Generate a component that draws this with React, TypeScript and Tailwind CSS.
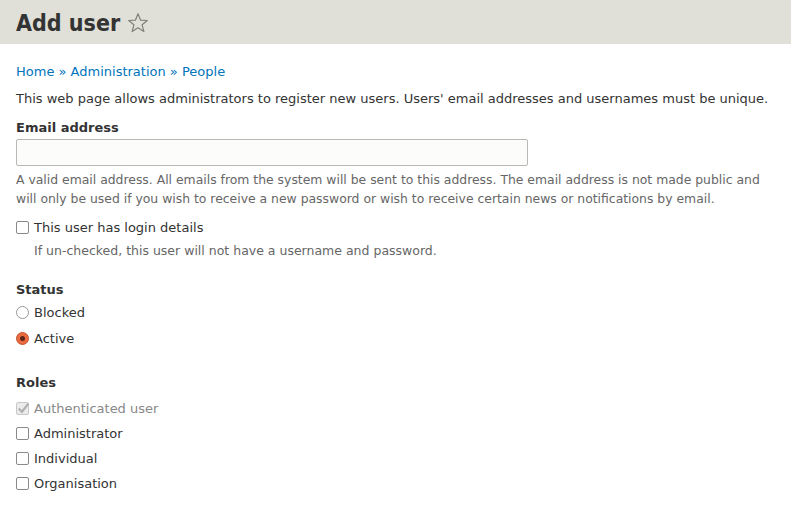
import React from "react";

const Checkbox = ({ disabled, checked }: { disabled?: boolean; checked?: boolean }) => (
  <span
    className={`inline-block w-[13px] h-[13px] rounded-[2px] border ${disabled ? "border-[#c8c8c8] bg-[#ececec]" : "border-[#8a8a8a] bg-white"} relative shrink-0`}
  >
    {checked && (
      <svg viewBox="0 0 13 13" className="absolute -left-px -top-[2px] w-[14px] h-[14px]">
        <path d="M2.5 7 L5.5 10 L11.5 2.5" fill="none" stroke="#b0b0b0" strokeWidth="2" />
      </svg>
    )}
  </span>
);

const Radio = ({ checked }: { checked?: boolean }) =>
  checked ? (
    <span className="inline-flex items-center justify-center w-[13px] h-[13px] rounded-full border border-[#c0542e] bg-[#ec6a40] shrink-0">
      <span className="w-[5px] h-[5px] rounded-full bg-[#5a2416]" />
    </span>
  ) : (
    <span className="inline-block w-[13px] h-[13px] rounded-full border border-[#9a9a9a] bg-white shrink-0" />
  );

export default function App() {
  return (
    <div className="w-[791px] h-[510px] bg-white text-[#333] text-[13px] overflow-hidden" style={{ fontFamily: '"DejaVu Sans", sans-serif' }}>
      <div className="h-[44px] bg-[#e0e0d8] px-4 pt-[3px] flex items-center">
        <h1 className="text-[23px] font-bold text-[#333] flex items-center gap-[6px]" style={{ fontFamily: '"DejaVu Sans Condensed", "DejaVu Sans", sans-serif' }}>
          Add user
          <svg viewBox="0 0 24 24" className="w-[24px] h-[24px] -mt-[1px]">
            <path d="M12 2.8 L14.6 9.2 L21.3 9.5 L16.1 13.8 L17.9 20.6 L12 16.8 L6.1 20.6 L7.9 13.8 L2.7 9.5 L9.4 9.2 Z" fill="none" stroke="#808078" strokeWidth="1.2" strokeLinejoin="round" />
          </svg>
        </h1>
      </div>
      <div className="px-4 pt-[18px]">
        <div className="text-[#0074bd] leading-[19px]">Home » Administration » People</div>
        <p className="mt-[8px] leading-[19px]">This web page allows administrators to register new users. Users' email addresses and usernames must be unique.</p>
        <div className="mt-[10px] font-bold leading-[19px]">Email address</div>
        <div className="mt-[2px] w-[512px] h-[27px] border border-[#b8b8b8] rounded-[2px] bg-[#fcfcfa]" />
        <p className="mt-[4px] text-[#666] text-[12.4px] leading-[19px]">A valid email address. All emails from the system will be sent to this address. The email address is not made public and will only be used if you wish to receive a new password or wish to receive certain news or notifications by email.</p>
        <div className="mt-[10px] flex items-center gap-[5px] leading-[19px]"><Checkbox /> This user has login details</div>
        <p className="mt-[4px] pl-[18px] text-[#666] text-[12.5px] leading-[19px]">If un-checked, this user will not have a username and password.</p>
        <div className="mt-[20px] font-bold leading-[19px]">Status</div>
        <div className="mt-[4px] flex items-center gap-[5px] leading-[19px]"><Radio /> Blocked</div>
        <div className="mt-[7px] flex items-center gap-[5px] leading-[19px]"><Radio checked /> Active</div>
        <div className="mt-[25px] font-bold leading-[19px]">Roles</div>
        <div className="mt-[7px] flex items-center gap-[5px] leading-[19px] text-[#888]"><Checkbox disabled checked /> Authenticated user</div>
        <div className="mt-[6px] flex items-center gap-[5px] leading-[19px]"><Checkbox /> Administrator</div>
        <div className="mt-[6px] flex items-center gap-[5px] leading-[19px]"><Checkbox /> Individual</div>
        <div className="mt-[6px] flex items-center gap-[5px] leading-[19px]"><Checkbox /> Organisation</div>
      </div>
    </div>
  );
}
